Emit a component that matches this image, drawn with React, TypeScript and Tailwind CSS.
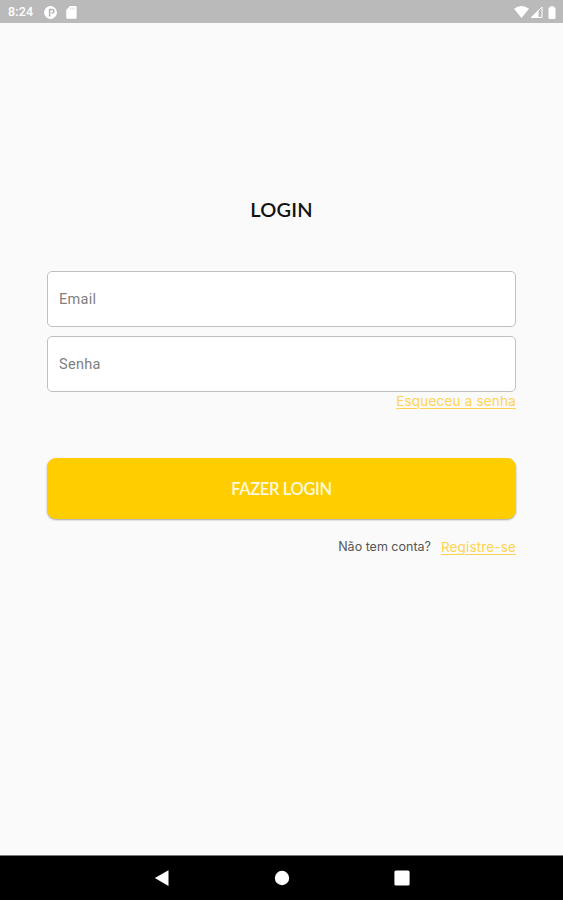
import type { ReactNode } from "react";

function StatusBar() {
  return (
    <header className="flex h-[23px] items-center justify-between bg-[#bababa] pt-px pr-[7px] pl-2 text-white">
      <div className="flex items-center">
        <span className="w-9 font-['Roboto',sans-serif] text-[12.5px] leading-none font-medium tracking-[0.2px] whitespace-nowrap">8:24</span>
        <svg className="size-[13px]" viewBox="0 0 13 13">
          <circle cx="6.5" cy="6.5" r="6.4" fill="#fff" />
          <path d="M5.6 10.6V3.6h2.6a1.6 1.6 0 0 1 0 3.4H7.6" fill="none" stroke="#b0b0b0" strokeWidth="1.5" />
        </svg>
        <svg className="ml-[9px] h-[13px] w-[11px]" viewBox="0 0 11 13">
          <path d="M4 0h5.5Q10.6 0 10.6 1.1v10.6q0 1.1-1.1 1.1H1.3q-1.1 0-1.1-1.1V4z" fill="#fff" />
          <path d="M4.4 1.5v2M6.3 1.5v2M8.2 1.5v2" stroke="#d4d4d4" strokeWidth="0.8" />
        </svg>
      </div>
      <div className="flex items-center">
        <svg className="h-3 w-[15px]" viewBox="0 0 15 12">
          <path d="M0 2.7Q7.5-2.5 15 2.7L7.5 12z" fill="#fff" />
        </svg>
        <svg className="ml-px h-3 w-[13px]" viewBox="0 0 13 12">
          <path d="M1.5 11.4 12 1v10.4z" fill="none" stroke="#fff" strokeWidth="1" />
          <path d="M.5 12 8.5 4v8z" fill="#fff" />
        </svg>
        <svg className="ml-[5px] h-[13px] w-2" viewBox="0 0 8 13">
          <path d="M2.5 0h3v1.3h1q1 0 1 1V12q0 1-1 1h-5q-1 0-1-1V2.3q0-1 1-1h1z" fill="#fff" />
        </svg>
      </div>
    </header>
  );
}

function Field({ label, type }: { label: string; type: string }) {
  return (
    <input
      type={type}
      placeholder={label}
      className="block h-14 w-full rounded-[5px] border-[1.5px] border-[#c0c0c0] bg-white px-[11px] pt-px font-['Roboto',sans-serif] text-[14.5px] tracking-[0.3px] outline-none placeholder:text-[#808080]"
    />
  );
}

function TextLink({ children }: { children: ReactNode }) {
  return (
    <a href="#" className="text-[#ffd351] underline decoration-1 underline-offset-2">
      {children}
    </a>
  );
}

function NavBar() {
  return (
    <nav className="flex h-[45px] items-center justify-center gap-[104px] border-t border-[#777] bg-black">
      <svg className="size-4" viewBox="0 0 16 16">
        <path d="M.8 8 14.5.3v15.6z" fill="#fff" />
      </svg>
      <svg className="size-4" viewBox="0 0 16 16">
        <circle cx="8" cy="8" r="7.2" fill="#fff" />
      </svg>
      <svg className="size-4" viewBox="0 0 16 16">
        <rect x=".4" y=".4" width="15.2" height="15.2" rx="1.6" fill="#fff" />
      </svg>
    </nav>
  );
}

export default function App() {
  return (
    <div className="flex h-screen w-full flex-col overflow-hidden bg-[#fafafa] font-['Lato',sans-serif]">
      <StatusBar />
      <main className="flex flex-1 flex-col px-[47px] pt-[171px]">
        <h1 className="text-center text-[20px] leading-[30px] font-semibold tracking-[0.2px] text-[#111]">LOGIN</h1>
        <form className="mt-[47px]" onSubmit={(e) => e.preventDefault()}>
          <div className="flex flex-col gap-[9px]">
            <Field label="Email" type="email" />
            <Field label="Senha" type="password" />
          </div>
          <div className="text-right font-['Inter',sans-serif] text-[13.5px] leading-[18px] tracking-[0.2px]">
            <TextLink>Esqueceu a senha</TextLink>
          </div>
          <button
            type="submit"
            className="mt-12 block h-[61px] w-full rounded-[9px] bg-[#ffcd00] pt-px text-[16.5px] font-semibold tracking-[-0.35px] text-[#fff9df] shadow-[0_1px_2px_rgba(0,0,0,0.35)]"
          >
            FAZER LOGIN
          </button>
        </form>
        <div className="mt-[18px] flex justify-end gap-[10px] font-['Inter',sans-serif] text-[12.5px] leading-5">
          <span className="text-[#555]">Não tem conta?</span>
          <span className="text-[13.5px] tracking-[0.15px]">
            <TextLink>Registre-se</TextLink>
          </span>
        </div>
      </main>
      <NavBar />
    </div>
  );
}
